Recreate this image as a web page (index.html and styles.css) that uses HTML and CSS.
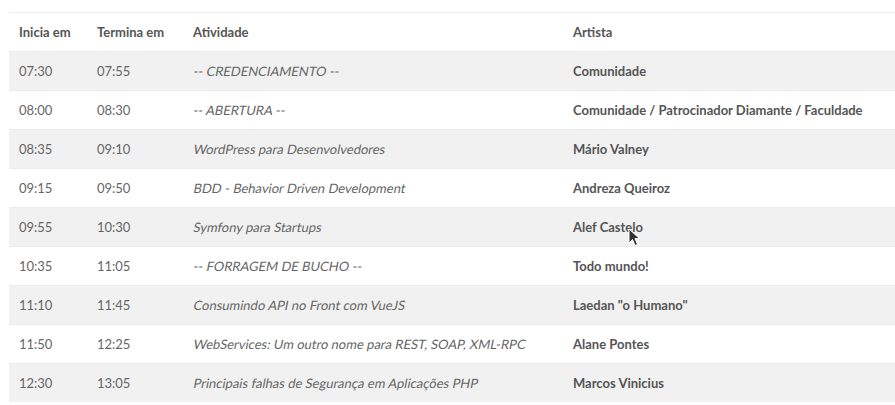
FILE: index.html
```html
<!DOCTYPE html>
<html lang="pt-BR">
<head>
<meta charset="utf-8">
<link rel="stylesheet" href="styles.css">
</head>
<body>
<div class="wrap">
<table class="schedule">
  <colgroup>
    <col class="c-start"><col class="c-end"><col class="c-act"><col class="c-artist">
  </colgroup>
  <thead>
    <tr><th>Inicia em</th><th>Termina em</th><th>Atividade</th><th>Artista</th></tr>
  </thead>
  <tbody>
    <tr><td>07:30</td><td>07:55</td><td><em class="act">-- CREDENCIAMENTO --</em></td><td class="artist">Comunidade</td></tr>
    <tr><td>08:00</td><td>08:30</td><td><em class="act">-- ABERTURA --</em></td><td class="artist">Comunidade / Patrocinador Diamante / Faculdade</td></tr>
    <tr><td>08:35</td><td>09:10</td><td><em class="act">WordPress para Desenvolvedores</em></td><td class="artist">Mário Valney</td></tr>
    <tr><td>09:15</td><td>09:50</td><td><em class="act">BDD - Behavior Driven Development</em></td><td class="artist">Andreza Queiroz</td></tr>
    <tr><td>09:55</td><td>10:30</td><td><em class="act">Symfony para Startups</em></td><td class="artist cursor-cell">Alef Castelo<svg class="cursor" width="12" height="19" viewBox="0 0 12 19"><path d="M1 1 L1 15 L4.5 11.5 L7 17.5 L9.5 16.5 L7 10.5 L11.5 10.5 Z" fill="#333" stroke="#fff" stroke-width="1"/></svg></td></tr>
    <tr><td>10:35</td><td>11:05</td><td><em class="act">-- FORRAGEM DE BUCHO --</em></td><td class="artist">Todo mundo!</td></tr>
    <tr><td>11:10</td><td>11:45</td><td><em class="act">Consumindo API no Front com VueJS</em></td><td class="artist">Laedan "o Humano"</td></tr>
    <tr><td>11:50</td><td>12:25</td><td><em class="act">WebServices: Um outro nome para REST, SOAP, XML-RPC</em></td><td class="artist">Alane Pontes</td></tr>
    <tr><td>12:30</td><td>13:05</td><td><em class="act">Principais falhas de Segurança em Aplicações PHP</em></td><td class="artist">Marcos Vinicius</td></tr>
  </tbody>
</table>
</div>
</body>
</html>
```
FILE: styles.css
```css
html, body {
  margin: 0;
  padding: 0;
  background: #fff;
  overflow: hidden;
}
.wrap {
  padding: 12px 0 0 9px;
}
.schedule {
  width: 887px;
  border-collapse: collapse;
  table-layout: fixed;
  font-family: Lato, "Open Sans", sans-serif;
  font-size: 13px;
  font-weight: 400;
  color: #666;
  border-top: 1px solid #ececec;
}
.c-start { width: 78px; }
.c-end { width: 96px; }
.c-act { width: 380px; }
.schedule th,
.schedule td {
  text-align: left;
  padding: 10px 10px;
  line-height: 18px;
  white-space: nowrap;
}
.schedule th {
  font-weight: 700;
  color: #555;
}
.schedule tbody tr td {
  border-top: 1px solid #ececec;
}
.schedule tbody tr:nth-child(odd) {
  background: #f1f1f1;
}
.act {
  display: inline-block;
  font-style: normal;
  transform: skewX(-11deg);
  transform-origin: 0 70%;
}
.artist {
  font-weight: 700;
  color: #555;
}
.cursor-cell {
  position: relative;
}
.cursor {
  position: absolute;
  left: 65px;
  top: 20px;
}
```
